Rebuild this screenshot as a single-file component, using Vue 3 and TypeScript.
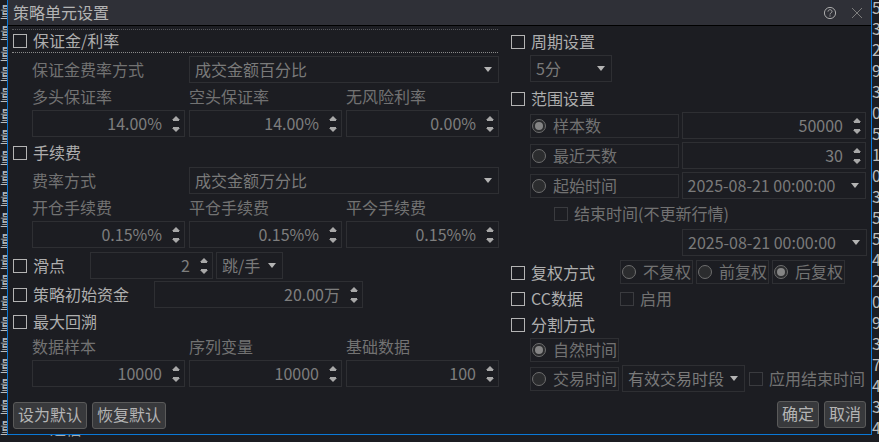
<script setup lang="ts">
interface Spin { label: string; value: string }
const marginRates: Spin[] = [
  { label: '多头保证率', value: '14.00%' },
  { label: '空头保证率', value: '14.00%' },
  { label: '无风险利率', value: '0.00%' },
]
const fees: Spin[] = [
  { label: '开仓手续费', value: '0.15%%' },
  { label: '平仓手续费', value: '0.15%%' },
  { label: '平今手续费', value: '0.15%%' },
]
const drawdown: Spin[] = [
  { label: '数据样本', value: '10000' },
  { label: '序列变量', value: '10000' },
  { label: '基础数据', value: '100' },
]
const leftGlyphs: string[] = Array.from({ length: 21 }, () => '量')
const rightGlyphs: string[] = '5 3 2 9 3 0 5 1 0 3 5 5 4 2 0 9 3 7 4 3 4'.split(' ')
const adjust = [
  { label: '不复权', on: false },
  { label: '前复权', on: false },
  { label: '后复权', on: true },
]
const arrowPath = 'M4 0L8 4H0z M1 4h6v1H1z M1 11h6v1H1z M0 12h8L4 16z'
</script>

<template>
  <div class="screen">
    <div class="back back-left"><div v-for="(g, i) in leftGlyphs" :key="i">{{ g }}</div></div>
    <div class="back back-right"><div v-for="(g, i) in rightGlyphs" :key="i">{{ g }}</div></div>
    <div class="back-bottom"><span>4</span><span class="bb2">通信</span><span class="bb3">1</span></div>

    <div class="dialog">
      <header class="title">
        <span class="title-text">策略单元设置</span>
        <svg class="help" width="14" height="14" viewBox="0 0 14 14" fill="none" stroke="#a9a9a9">
          <circle cx="7" cy="7" r="5.6" />
          <path d="M5 5.6c0-1.2 1-1.9 2-1.9s2 .7 2 1.8c0 1.5-2 1.4-2 3" />
          <path d="M7 9.4v1.2" />
        </svg>
        <svg class="close" width="12" height="12" viewBox="0 0 12 12" stroke="#7c7c7c" fill="none">
          <path d="M1 1l10 10M11 1L1 11" />
        </svg>
      </header>

      <div class="body">
        <div class="col col-left">
          <div class="check-row focus"><i class="cb"></i><span class="head">保证金/利率</span></div>
          <div class="line l1">
            <span class="dim fixed">保证金费率方式</span>
            <div class="combo grow"><span>成交金额百分比</span><b class="tri"></b></div>
          </div>
          <div class="triple labels"><span v-for="s in marginRates" :key="s.label" class="dim">{{ s.label }}</span></div>
          <div class="triple">
            <div v-for="s in marginRates" :key="s.label" class="spin">
              <span>{{ s.value }}</span>
              <svg class="arrows" width="8" height="16" viewBox="0 0 8 16"><path :d="arrowPath" fill="#a8a8a8" /></svg>
            </div>
          </div>

          <div class="check-row r-fee"><i class="cb"></i><span class="head">手续费</span></div>
          <div class="line l2">
            <span class="dim fixed">费率方式</span>
            <div class="combo grow"><span>成交金额万分比</span><b class="tri"></b></div>
          </div>
          <div class="triple labels"><span v-for="s in fees" :key="s.label" class="dim">{{ s.label }}</span></div>
          <div class="triple">
            <div v-for="s in fees" :key="s.label" class="spin">
              <span>{{ s.value }}</span>
              <svg class="arrows" width="8" height="16" viewBox="0 0 8 16"><path :d="arrowPath" fill="#a8a8a8" /></svg>
            </div>
          </div>

          <div class="check-row slip">
            <i class="cb"></i><span class="head slip-label">滑点</span>
            <div class="spin slip-spin">
              <span>2</span>
              <svg class="arrows" width="8" height="16" viewBox="0 0 8 16"><path :d="arrowPath" fill="#a8a8a8" /></svg>
            </div>
            <div class="combo slip-combo"><span>跳/手</span><b class="tri"></b></div>
          </div>
          <div class="check-row capital">
            <i class="cb"></i><span class="head capital-label">策略初始资金</span>
            <div class="spin capital-spin">
              <span>20.00万</span>
              <svg class="arrows" width="8" height="16" viewBox="0 0 8 16"><path :d="arrowPath" fill="#a8a8a8" /></svg>
            </div>
          </div>
          <div class="check-row dd"><i class="cb"></i><span class="head">最大回溯</span></div>
          <div class="triple labels l3"><span v-for="s in drawdown" :key="s.label" class="dim">{{ s.label }}</span></div>
          <div class="triple">
            <div v-for="s in drawdown" :key="s.label" class="spin">
              <span>{{ s.value }}</span>
              <svg class="arrows" width="8" height="16" viewBox="0 0 8 16"><path :d="arrowPath" fill="#a8a8a8" /></svg>
            </div>
          </div>
          <div class="btns">
            <button class="btn wide">设为默认</button>
            <button class="btn wide">恢复默认</button>
          </div>
        </div>

        <div class="col col-right">
          <div class="check-row rr1"><i class="cb"></i><span class="head">周期设置</span></div>
          <div class="combo period"><span>5分</span><b class="tri"></b></div>
          <div class="check-row rr2"><i class="cb"></i><span class="head">范围设置</span></div>

          <div class="range first">
            <div class="radio-box"><i class="radio on"></i><span class="dim">样本数</span></div>
            <div class="spin range-input">
              <span>50000</span>
              <svg class="arrows" width="8" height="16" viewBox="0 0 8 16"><path :d="arrowPath" fill="#a8a8a8" /></svg>
            </div>
          </div>
          <div class="range">
            <div class="radio-box"><i class="radio"></i><span class="dim">最近天数</span></div>
            <div class="spin range-input">
              <span>30</span>
              <svg class="arrows" width="8" height="16" viewBox="0 0 8 16"><path :d="arrowPath" fill="#a8a8a8" /></svg>
            </div>
          </div>
          <div class="range">
            <div class="radio-box"><i class="radio"></i><span class="dim">起始时间</span></div>
            <div class="combo range-input"><span>2025-08-21 00:00:00</span><b class="tri"></b></div>
          </div>
          <div class="end-row"><i class="cb off"></i><span class="dim">结束时间(不更新行情)</span></div>
          <div class="end-combo"><div class="combo range-input"><span>2025-08-21 00:00:00</span><b class="tri"></b></div></div>

          <div class="check-row adj">
            <i class="cb"></i><span class="head adj-label">复权方式</span>
            <div class="adj-group">
              <div v-for="a in adjust" :key="a.label" class="radio-box adj-box">
                <i class="radio" :class="{ on: a.on }"></i><span class="dim">{{ a.label }}</span>
              </div>
            </div>
          </div>
          <div class="check-row cc">
            <i class="cb"></i><span class="head adj-label">CC数据</span>
            <i class="cb off"></i><span class="dim enable">启用</span>
          </div>
          <div class="check-row split"><i class="cb"></i><span class="head">分割方式</span></div>
          <div class="radio-box split-box natural"><i class="radio on"></i><span class="dim">自然时间</span></div>
          <div class="trade">
            <div class="radio-box split-box"><i class="radio"></i><span class="dim">交易时间</span></div>
            <div class="combo trade-combo"><span>有效交易时段</span><b class="tri"></b></div>
            <i class="cb off"></i><span class="dim enable">应用结束时间</span>
          </div>
          <div class="btns right">
            <button class="btn">确定</button>
            <button class="btn">取消</button>
          </div>
        </div>
      </div>
    </div>
  </div>
</template>

<style>
html, body { margin: 0; background: #1c1d22; }
</style>

<style scoped>
.screen {
  position: relative;
  width: 879px;
  height: 442px;
  overflow: hidden;
  background: #1c1d22;
  color: #a8a8a8;
  font: 16px/20px "Noto Sans CJK SC", "Noto Sans", sans-serif;
}
.back { position: absolute; color: #bdbdbd; }
.back-left { left: 0; top: 1px; line-height: 20.8px; }
.back-right { left: 872px; top: -3px; line-height: 21px; }
.back-bottom { position: absolute; left: 26px; top: 418px; display: flex; color: #aaa; white-space: nowrap; }
.bb2 { margin-left: 15px; }
.bb3 { margin-left: 495px; }
.dialog {
  position: absolute;
  left: 7px;
  top: 0;
  width: 863px;
  height: 434px;
  background: #1c1d22;
  border: 1px solid #0a78d7;
  border-top: 0;
}
.title {
  display: flex;
  align-items: center;
  height: 25px;
  background: #2f3037;
  border-bottom: 1px solid #000;
  padding-left: 5px;
  color: #b4b4b4;
}
.title-text { flex: 1; padding-bottom: 2px; }
.help { margin-right: 14px; }
.close { margin-right: 8px; }
.body { display: flex; padding-left: 5px; }
.col { display: flex; flex-direction: column; }
.col-left { width: 486px; margin-right: 12px; }
.col-right { width: 355px; }

.check-row { display: flex; align-items: center; height: 24px; }
.focus {
  box-sizing: border-box;
  margin: 3px 0 0 -1px;
  padding-left: 1px;
  width: 486px;
  height: 24px;
  border-top: 1px dotted #55565a;
  border-bottom: 1px dotted #8a8a8a;
}
.cb {
  flex: none;
  box-sizing: border-box;
  width: 14px;
  height: 14px;
  border: 1px solid #b4b4b4;
  margin-right: 6px;
}
.cb.off { border-color: #3a3b3f; }
.head { color: #aeaeae; padding-bottom: 2px; }
.dim { color: #727272; white-space: nowrap; padding-bottom: 2px; }
.line { display: flex; align-items: center; padding-left: 19px; }
.l1 { margin-top: 3px; }
.l2 { margin-top: 2px; }
.fixed { width: 157px; }
.grow { width: 310px; }

.combo {
  box-sizing: border-box;
  display: flex;
  align-items: center;
  justify-content: space-between;
  height: 27px;
  padding: 0 6px 0 5px;
  border: 1px solid #2e2f33;
  color: #7a7a7a;
  white-space: nowrap;
}
.combo span { padding-bottom: 2px; }
.tri {
  flex: none;
  width: 0;
  height: 0;
  border-left: 4px solid transparent;
  border-right: 4px solid transparent;
  border-top: 5px solid #b4b4b4;
}
.triple {
  display: grid;
  grid-template-columns: repeat(3, 153px);
  column-gap: 4px;
  padding-left: 19px;
}
.labels { height: 27px; align-items: center; }
.spin {
  box-sizing: border-box;
  display: flex;
  align-items: center;
  justify-content: flex-end;
  height: 27px;
  padding-right: 4px;
  border: 1px solid #2e2f33;
  color: #7e7e7e;
}
.spin span { padding-bottom: 2px; }
.arrows { margin-left: 10px; flex: none; }

.r-fee { margin-top: 4px; }
.slip { margin-top: 4px; height: 27px; }
.slip-label { width: 57px; }
.slip-spin { width: 123px; }
.slip-combo { width: 67px; margin-left: 3px; }
.capital { margin-top: 2px; height: 27px; }
.capital-label { width: 105px; flex: none; white-space: nowrap; margin-right: 16px; }
.capital-spin { width: 209px; }
.dd { margin-top: 2px; }
.l3 { height: 26px; }
.btns { display: flex; gap: 5px; margin-top: 15px; }
.btns.right { justify-content: flex-end; margin: 9px 0 0; }
.btn {
  box-sizing: border-box;
  width: 42px;
  height: 27px;
  padding: 0 0 3px;
  border: 1px solid #5a5a5a;
  border-radius: 3px;
  background: #38393c;
  color: #b4b4b4;
  font: inherit;
}
.btn.wide { width: 74px; }

.rr1 { margin-top: 4px; }
.period { width: 82px; margin: 1px 0 0 19px; }
.rr2 { margin-top: 5px; }
.range { display: flex; align-items: center; gap: 3px; margin: 3px 0 0 19px; height: 27px; }
.range.first { margin-top: 1px; }
.radio-box {
  box-sizing: border-box;
  display: flex;
  align-items: center;
  width: 149px;
  height: 24px;
  padding-left: 1px;
  border: 1px solid #2e2f33;
  white-space: nowrap;
}
.radio {
  flex: none;
  box-sizing: border-box;
  width: 14px;
  height: 14px;
  margin-right: 7px;
  border: 1px solid #6e6e6e;
  border-radius: 50%;
  background: #2b2c2e;
  display: flex;
  align-items: center;
  justify-content: center;
}
.radio.on::after { content: ""; width: 8px; height: 8px; border-radius: 50%; background: #858585; }
.range-input { width: 185px; }
.end-row { display: flex; align-items: center; margin: 2px 0 0 43px; height: 26px; }
.end-combo { margin: 2px 0 0 171px; }

.adj { margin-top: 5px; }
.adj-label { width: 89px; flex: none; white-space: nowrap; }
.adj-group { display: flex; gap: 3px; align-self: flex-start; margin-top: -1px; }
.adj-box { width: 73px; }
.cc { margin-top: 2px; }
.enable { color: #727272; }
.split { margin-top: 2px; }
.split-box { width: 89px; margin-left: 19px; flex: none; }
.natural { margin-top: 1px; }
.trade { display: flex; align-items: center; margin-top: 3px; height: 27px; }
.trade-combo { width: 123px; margin: 0 4px 0 3px; flex: none; }
</style>
